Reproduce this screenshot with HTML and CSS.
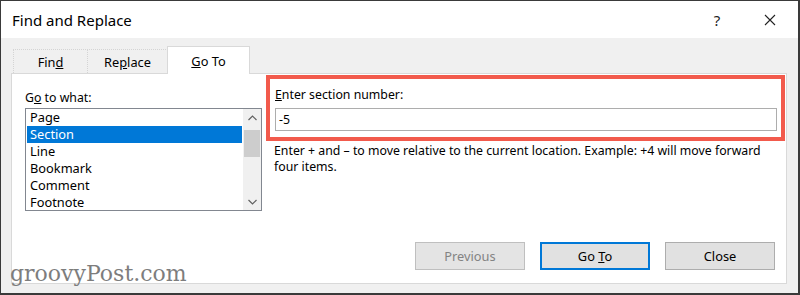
FILE: index.html
```html
<!DOCTYPE html>
<html>
<head>
<meta charset="utf-8">
<link rel="stylesheet" href="styles.css">
</head>
<body>
<div class="window">
  <div class="titlebar">
    <span class="title">Find and Replace</span>
    <span class="help">?</span>
    <span class="close-x"><svg width="12" height="12" viewBox="0 0 12 12"><path d="M1 1 L11 11 M11 1 L1 11" stroke="#222" stroke-width="1.1" fill="none"/></svg></span>
  </div>
  <div class="body">
    <div class="tabs">
      <div class="tab tab-find"><span>Fin<u>d</u></span></div>
      <div class="tab tab-replace"><span>Re<u>p</u>lace</span></div>
      <div class="tab tab-goto active"><span><u>G</u>o To</span></div>
    </div>
    <div class="panel">
      <div class="top">
        <div class="leftcol">
          <div class="label">G<u>o</u> to what:</div>
          <div class="listbox">
            <div class="items">
              <div class="item">Page</div>
              <div class="item selected">Section</div>
              <div class="item">Line</div>
              <div class="item">Bookmark</div>
              <div class="item">Comment</div>
              <div class="item">Footnote</div>
            </div>
            <div class="scrollbar">
              <div class="arrow"><svg width="9" height="6" viewBox="0 0 9 6"><path d="M0.5 5 L4.5 1 L8.5 5" stroke="#606060" stroke-width="1.2" fill="none"/></svg></div>
              <div class="thumb"></div>
              <div class="track"></div>
              <div class="arrow"><svg width="9" height="6" viewBox="0 0 9 6"><path d="M0.5 1 L4.5 5 L8.5 1" stroke="#606060" stroke-width="1.2" fill="none"/></svg></div>
            </div>
          </div>
        </div>
        <div class="rightcol">
          <div class="highlight">
            <div class="label2"><u>E</u>nter section number:</div>
            <div class="input">-5</div>
          </div>
          <div class="helptext">Enter + and – to move relative to the current location. Example: +4 will move forward four items.</div>
        </div>
      </div>
      <div class="buttons">
        <div class="btn disabled"><span>Previous</span></div>
        <div class="btn default"><span>Go <u>T</u>o</span></div>
        <div class="btn"><span>Close</span></div>
      </div>
    </div>
    <div class="watermark">groovyPost.com</div>
  </div>
</div>
</body>
</html>
```
FILE: styles.css
```css
html, body {
  margin: 0;
  padding: 0;
  background: #ffffff;
}
.window {
  width: 800px;
  height: 295px;
  box-sizing: border-box;
  border-top: 1px solid #3a3a3a;
  border-left: 1px solid #3a3a3a;
  border-right: 2px solid #3a3a3a;
  border-bottom: 2px solid #3a3a3a;
  display: flex;
  flex-direction: column;
  font-family: "Noto Sans", "Open Sans", sans-serif;
  font-size: 12.3px;
  color: #000;
  overflow: hidden;
}
.titlebar {
  height: 37px;
  background: #fff;
  display: flex;
  align-items: center;
  flex-shrink: 0;
}
.title {
  font-size: 15px;
  margin-left: 11px;
  flex: 1;
  color: #000;
}
.help {
  font-size: 15px;
  width: 20px;
  text-align: center;
  margin-right: 37px;
  color: #222;
}
.close-x {
  display: flex;
  width: 12px;
  height: 12px;
  margin-right: 22px;
}
.body {
  flex: 1;
  background: #f0f0f0;
  padding: 8px 11px 9px 10px;
  display: flex;
  flex-direction: column;
  position: relative;
}
.tabs {
  display: flex;
  align-items: flex-end;
  height: 27px;
  padding-left: 2px;
}
.tab {
  box-sizing: border-box;
  height: 24px;
  border: 1px dotted #d4d4d4;
  border-bottom: none;
  display: flex;
  align-items: center;
  justify-content: center;
  font-size: 12.8px;
  background: #f0f0f0;
  padding-top: 1px;
}
.tab-find { width: 75px; }
.tab-replace { width: 81px; margin-left: -1px; }
.tab-goto {
  width: 83px;
  margin-left: -1px;
  height: 28px;
  margin-bottom: -1px;
  background: #fff;
  border: 1px solid #d9d9d9;
  border-bottom: none;
  position: relative;
  z-index: 1;
}
.panel {
  height: 211px;
  box-sizing: border-box;
  border: 1px solid #d9d9d9;
  background: #fff;
  display: flex;
  flex-direction: column;
}
.top {
  display: flex;
}
.leftcol {
  margin-left: 13px;
  width: 237px;
  padding-top: 16px;
}
.label {
  line-height: 16px;
  height: 16px;
  margin-bottom: 2px;
}
.listbox {
  box-sizing: border-box;
  height: 103px;
  border: 1px solid #828790;
  display: flex;
  overflow: hidden;
}
.items {
  flex: 1;
  padding: 0 1px;
}
.item {
  height: 17px;
  line-height: 17px;
  padding-left: 3px;
  font-size: 12.8px;
}
.item.selected {
  background: #0078d7;
  color: #fff;
}
.scrollbar {
  width: 18px;
  background: #f0f0f0;
  display: flex;
  flex-direction: column;
}
.arrow {
  height: 17px;
  display: flex;
  align-items: center;
  justify-content: center;
}
.thumb {
  height: 27px;
  background: #cdcdcd;
  margin: 4px 1px 0 1px;
}
.track {
  flex: 1;
}
.rightcol {
  flex: 1;
  margin-left: 4px;
  margin-right: 1px;
}
.highlight {
  margin-top: 1px;
  border: 4px solid #f25a4c;
  padding: 8px 4px 6px 5px;
}
.label2 {
  line-height: 16px;
  height: 16px;
  margin-bottom: 5px;
}
.input {
  box-sizing: border-box;
  height: 23px;
  border: 1px solid #adadad;
  line-height: 21px;
  padding-left: 3px;
}
.helptext {
  padding-left: 8px;
  padding-right: 10px;
  line-height: 16px;
  margin-top: 2px;
}
.buttons {
  margin-top: auto;
  display: flex;
  justify-content: flex-end;
  gap: 15px;
  padding-right: 11px;
  padding-bottom: 13px;
}
.btn {
  box-sizing: border-box;
  width: 110px;
  height: 28px;
  border: 1px solid #adadad;
  background: #e1e1e1;
  display: flex;
  align-items: center;
  justify-content: center;
  font-size: 12.8px;
}
.btn.disabled {
  color: #838383;
  border-color: #bfbfbf;
  background: #e4e4e4;
}
.btn.default {
  border: 2px solid #0078d7;
}
.watermark {
  position: absolute;
  left: 9px;
  bottom: 6px;
  font-family: "DejaVu Serif", "Liberation Serif", serif;
  font-size: 22px;
  color: #7d7d7d;
  line-height: 26px;
}
```
